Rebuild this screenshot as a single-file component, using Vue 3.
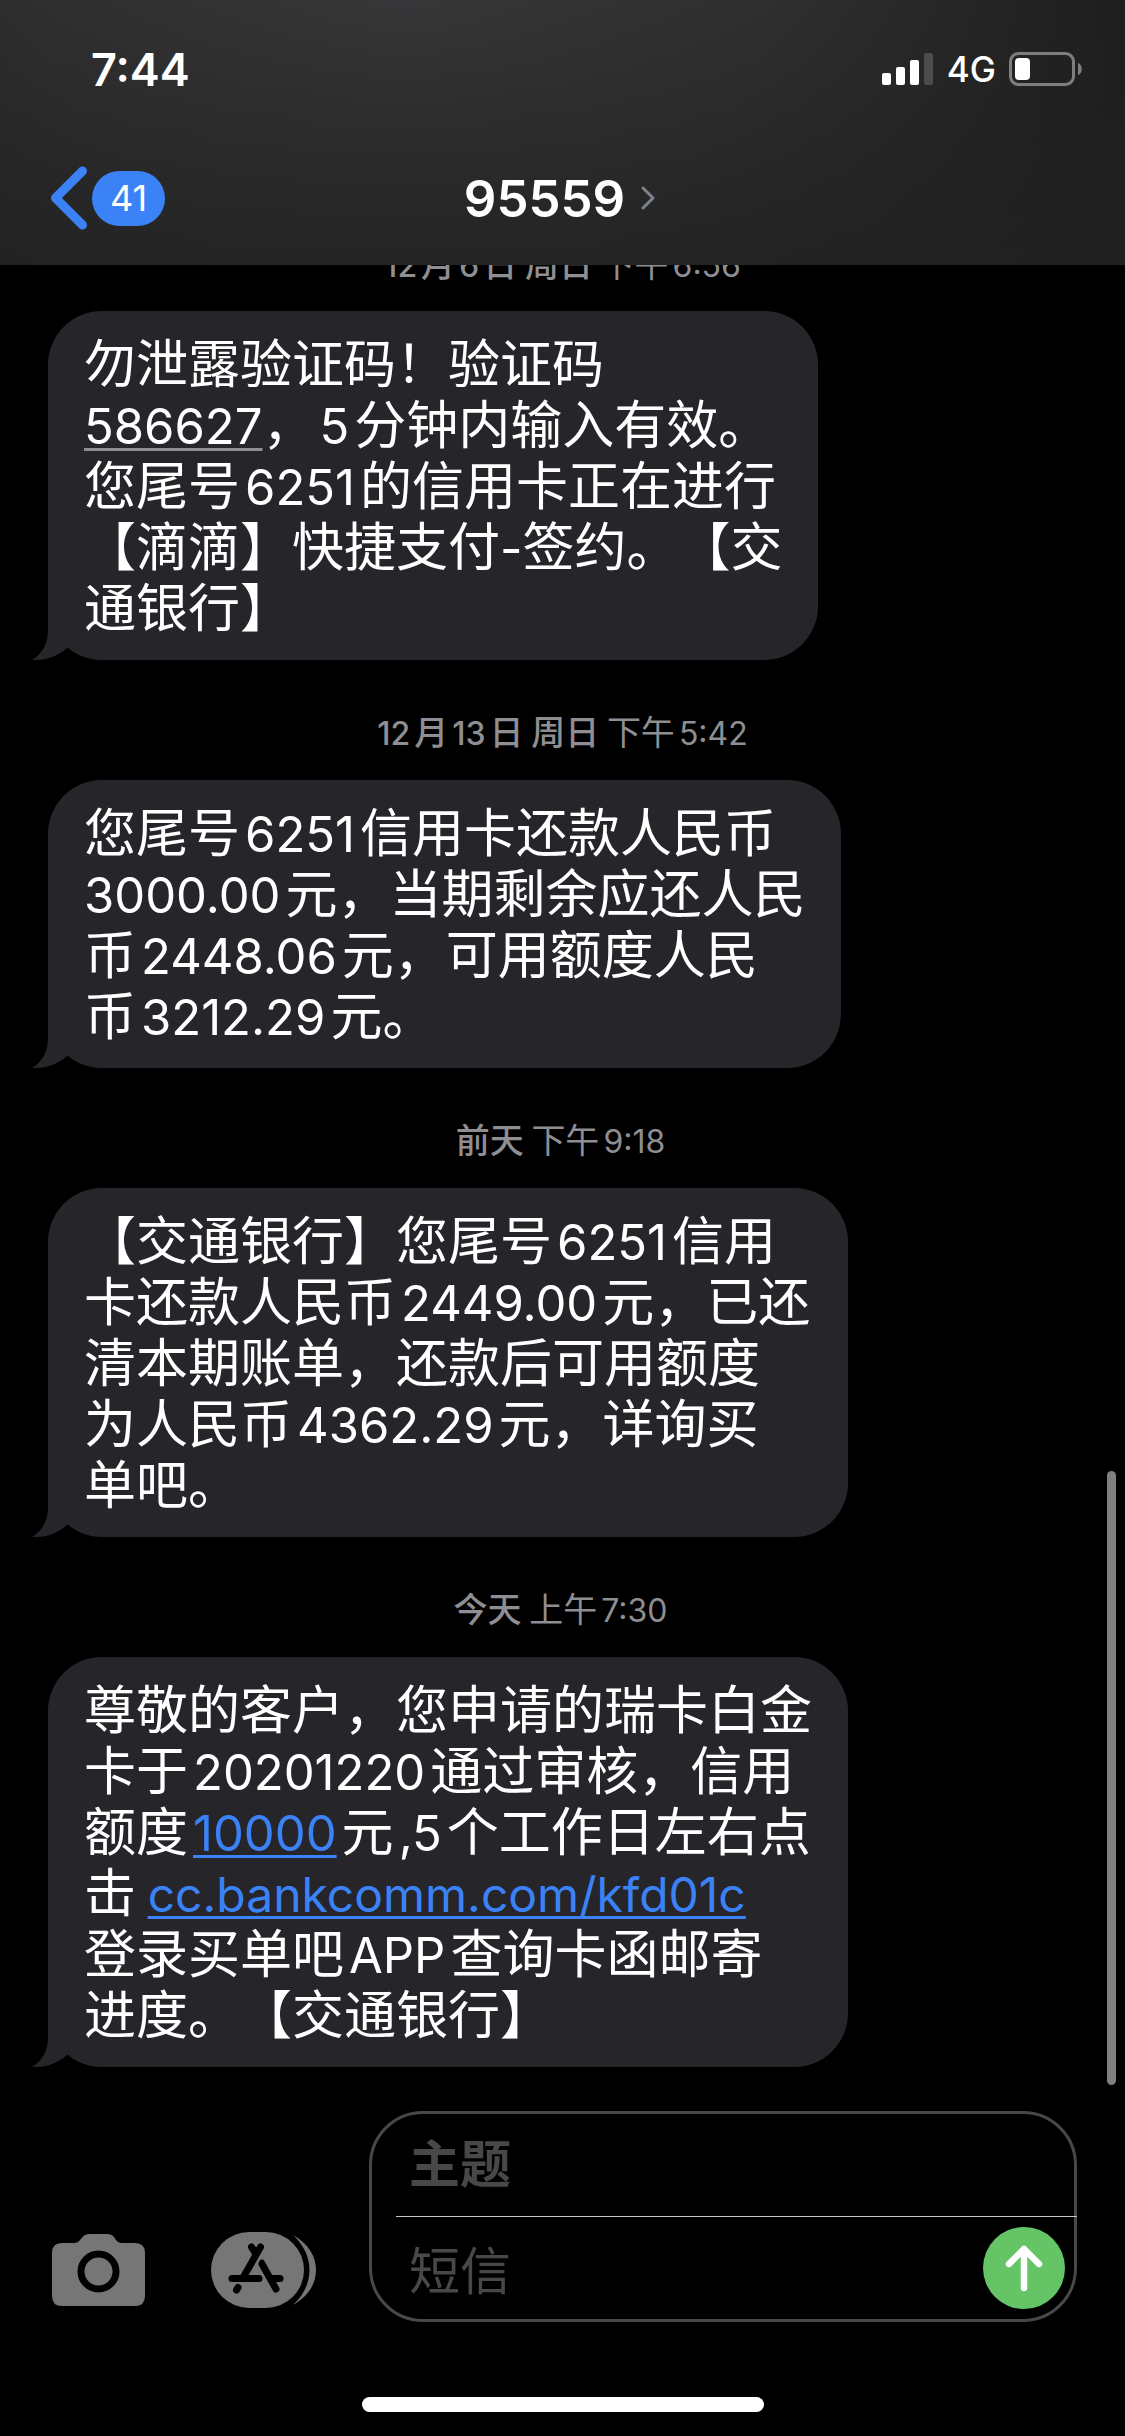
<script setup>
const LATIN = /([A-Za-z0-9,.:/-]+)/

const threads = [
  {
    day: '12月6日 周日',
    time: '下午6:56',
    size: 'w1',
    lines: [
      ['勿泄露验证码！验证码'],
      [{ code: '586627' }, '，5分钟内输入有效。'],
      ['您尾号6251的信用卡正在进行'],
      ['【滴滴】快捷支付-签约。【交'],
      ['通银行】'],
    ],
  },
  {
    day: '12月13日 周日',
    time: '下午5:42',
    size: 'w2',
    lines: [
      ['您尾号6251信用卡还款人民币'],
      ['3000.00元，当期剩余应还人民'],
      ['币2448.06元，可用额度人民'],
      ['币3212.29元。'],
    ],
  },
  {
    day: '前天',
    time: '下午9:18',
    size: 'w3',
    lines: [
      ['【交通银行】您尾号6251信用'],
      ['卡还款人民币2449.00元，已还'],
      ['清本期账单，还款后可用额度'],
      ['为人民币4362.29元，详询买'],
      ['单吧。'],
    ],
  },
  {
    day: '今天',
    time: '上午7:30',
    size: 'w3',
    lines: [
      ['尊敬的客户，您申请的瑞卡白金'],
      ['卡于20201220通过审核，信用'],
      ['额度', { link: '10000' }, '元,5个工作日左右点'],
      ['击 ', { link: 'cc.bankcomm.com/kfd01c', url: true }],
      ['登录买单吧APP查询卡函邮寄'],
      ['进度。【交通银行】'],
    ],
  },
]

// Splits a run of text into Chinese pieces and Latin/digit pieces.
function pieces(text) {
  return text
    .split(LATIN)
    .filter((t) => t !== '')
    .map((t) => ({ t, latin: LATIN.test(t), tight: t === '-' }))
}

// Flattens one line into pieces; a Latin piece that opens a line has no left gap.
function parts(line) {
  return line
    .flatMap((run) => {
      if (typeof run === 'string') return pieces(run)
      if (run.code) return [{ t: run.code, code: true }]
      return [{ t: run.link, link: true, url: run.url }]
    })
    .map((p, i) => ({ ...p, lead: i === 0 }))
}
</script>

<template>
  <div class="screen">
    <header class="top">
      <div class="status">
        <span class="clock">7:44</span>
        <div class="status-right">
          <svg width="52" height="32" viewBox="0 0 52 32" aria-hidden="true">
            <rect x="0" y="20" width="9" height="12" rx="2" fill="#fff" />
            <rect x="14" y="14" width="9" height="18" rx="2" fill="#fff" />
            <rect x="28" y="7" width="9" height="25" rx="2" fill="#fff" />
            <rect x="42" y="0" width="9" height="32" rx="2" fill="#4c4c4c" />
          </svg>
          <span class="network">4G</span>
          <svg width="74" height="34" viewBox="0 0 74 34" aria-hidden="true">
            <rect x="1.5" y="1.5" width="63" height="31" rx="8" fill="none" stroke="#7e7e7e" stroke-width="3" />
            <rect x="6" y="6" width="15" height="22" rx="4" fill="#fff" />
            <path d="M69 11c5 1 5 11 0 12z" fill="#7e7e7e" />
          </svg>
        </div>
      </div>
      <div class="nav">
        <button class="back" type="button" aria-label="返回">
          <svg width="38" height="64" viewBox="0 0 38 64" aria-hidden="true">
            <path d="M32.500 5 L5.500 32 L32.500 59" fill="none" stroke="#3b82f7" stroke-width="9" stroke-linecap="round" stroke-linejoin="round" />
          </svg>
          <span class="count">41</span>
        </button>
        <button class="contact" type="button">
          <span>95559</span>
          <svg width="14" height="24" viewBox="0 0 14 24" aria-hidden="true">
            <path d="M2 2 L12 12 L2 22" fill="none" stroke="#7d838c" stroke-width="3" stroke-linecap="round" stroke-linejoin="round" />
          </svg>
        </button>
        <span></span>
      </div>
    </header>

    <main class="chat">
      <div class="thread">
        <section v-for="m in threads" :key="m.day">
          <p class="stamp"><strong><template v-for="(p, i) in pieces(m.day)" :key="i"><span v-if="p.latin" class="small">{{ p.t }}</span><template v-else>{{ p.t }}</template></template></strong>&nbsp;<template v-for="(p, i) in pieces(m.time)" :key="i"><span v-if="p.latin" class="small">{{ p.t }}</span><template v-else>{{ p.t }}</template></template></p>
          <div class="bubble" :class="m.size">
            <p v-for="(line, n) in m.lines" :key="n" class="line"><template v-for="(p, i) in parts(line)" :key="i"><a v-if="p.link" class="latin" :class="{ url: p.url }" href="#">{{ p.t }}</a><a v-else-if="p.code" class="latin code" href="#">{{ p.t }}</a><span v-else-if="p.latin" class="latin" :class="{ lead: p.lead, tight: p.tight }">{{ p.t }}</span><template v-else>{{ p.t }}</template></template></p>
            <svg class="tail" width="36" height="54" viewBox="0 0 36 54" aria-hidden="true">
              <path d="M16 0 V24 C16 38 10 48 0 54 C14 55 26 50 35 42 V0 Z" fill="#26252a" />
            </svg>
          </div>
        </section>
      </div>
      <div class="scrollbar"></div>
    </main>

    <footer class="composer">
      <div class="tools">
        <button type="button" aria-label="相机">
          <svg width="93" height="72" viewBox="0 0 93 72" aria-hidden="true">
            <path d="M10 9 H22 Q26 9 28 6 Q32 0 37 0 H56 Q61 0 64 6 Q66 9 70 9 H83 Q93 9 93 19 V62 Q93 72 83 72 H10 Q0 72 0 62 V19 Q0 9 10 9 Z" fill="#767676" />
            <circle cx="46.500" cy="37.500" r="17.500" fill="none" stroke="#000" stroke-width="7" />
          </svg>
        </button>
        <button type="button" aria-label="应用">
          <svg width="106" height="76" viewBox="0 0 106 76" aria-hidden="true">
            <path d="M82 3 C98 12 105 25 105 38 C105 51 98 64 82 73 C104 53 104 23 82 3 Z" fill="#767676" />
            <rect width="93" height="76" rx="38" fill="#767676" />
            <g fill="none" stroke="#000" stroke-width="7" stroke-linecap="round" stroke-linejoin="round">
              <path d="M49.500 15 L32.500 45" />
              <path d="M40.500 15 L45 22" />
              <path d="M21 46.500 H48" />
              <path d="M62 46.500 H69" />
              <path d="M51 32 L65 57" />
              <path d="M51 30 L51.500 34" stroke-width="5" />
              <path d="M27 55.500 L25.500 58" />
            </g>
          </svg>
        </button>
      </div>
      <form class="field" @submit.prevent>
        <input class="subject" type="text" placeholder="主题" aria-label="主题" />
        <div class="body">
          <input type="text" placeholder="短信" aria-label="短信" />
          <button class="send" type="submit" aria-label="发送">
            <svg width="38" height="48" viewBox="0 0 38 48" aria-hidden="true">
              <path d="M19 44 V5 M4 20 L19 5 L34 20" fill="none" stroke="#fff" stroke-width="6.500" stroke-linecap="round" stroke-linejoin="round" />
            </svg>
          </button>
        </div>
      </form>
    </footer>
    <div class="home"></div>
  </div>
</template>

<style>
body {
  background: #000;
}
</style>

<style scoped>
.screen {
  display: flex;
  flex-direction: column;
  min-height: 100vh;
  box-sizing: border-box;
  padding-bottom: 24px;
  background: #000;
  color: #fff;
  font-family: "Inter", "Noto Sans CJK SC", sans-serif;
  text-spacing-trim: space-all;
}

button {
  display: flex;
  align-items: center;
  padding: 0;
  border: 0;
  background: none;
  color: inherit;
  font: inherit;
}

svg {
  display: block;
  flex: none;
}

.top {
  padding: 39px 0 35px;
  background:
    linear-gradient(to bottom, rgba(34, 34, 34, 0) 0%, rgba(34, 34, 34, 0.8) 100%),
    radial-gradient(ellipse 64% 190% at 36% 0%, #373739 0%, #2f2f30 50%, #1e1e1e 100%);
}

.status {
  display: flex;
  align-items: center;
  justify-content: space-between;
  height: 60px;
  padding: 0 42px 0 91px;
}

.clock {
  font-size: 45px;
  font-weight: 600;
}

.status-right {
  display: flex;
  align-items: center;
  gap: 13px;
}

.network {
  font-size: 35px;
  font-weight: 500;
}

.nav {
  display: grid;
  grid-template-columns: 1fr auto 1fr;
  align-items: center;
  height: 64px;
  margin-top: 67px;
  padding: 0 56px 0 50px;
}

.back {
  gap: 4px;
}

.count {
  width: 73px;
  border-radius: 28px;
  background: #3b82f7;
  font-size: 36px;
  line-height: 55px;
  text-align: center;
}

.contact {
  gap: 16px;
  font-size: 51px;
  font-weight: 600;
}

.chat {
  position: relative;
  overflow: hidden;
}

.thread {
  margin-top: -22px;
  padding: 0 48px 27px;
}

.stamp {
  margin: 0;
  padding-bottom: 28px;
  color: #8e8e93;
  font-family: "Noto Sans CJK SC", sans-serif;
  font-size: 34px;
  line-height: 40px;
  text-align: center;
  white-space: nowrap;
}

section + section .stamp {
  padding: 51px 0 29px;
}

.stamp strong {
  font-weight: 500;
}

.small {
  margin: 0 4px;
  font-family: "Inter", sans-serif;
  font-size: 32px;
  line-height: 1;
}

.bubble {
  position: relative;
  box-sizing: border-box;
  padding: 19px 36px 25px;
  border-radius: 54px;
  background: #26252a;
  font-family: "Noto Sans CJK SC", sans-serif;
  font-size: 52px;
}

.w1 {
  width: 770px;
}

.w2 {
  width: 793px;
}

.w3 {
  width: 800px;
}

.line {
  height: 61px;
  margin: 0;
  line-height: 61px;
  white-space: nowrap;
}

.latin {
  margin: 0 5px;
  font-family: "Inter", sans-serif;
  font-size: 49px;
  line-height: 1;
}

.latin.lead {
  margin-left: 0;
}

.latin.tight {
  margin: 0;
}

a.latin {
  color: #3b82f7;
  text-decoration: underline;
  text-decoration-thickness: 3px;
  text-underline-offset: 4px;
}

a.url {
  margin: 0;
  font-size: 48px;
}

a.code {
  margin: 0;
  color: #fff;
  text-decoration-color: #8e8e93;
}

.tail {
  position: absolute;
  bottom: 0;
  left: -16px;
}

.scrollbar {
  position: absolute;
  right: 9px;
  bottom: 9px;
  width: 9px;
  height: 614px;
  border-radius: 5px;
  background: #7f7f7f;
}

.composer {
  display: flex;
  align-items: flex-end;
  gap: 52px;
  padding: 17px 48px 0 52px;
}

.tools {
  display: flex;
  align-items: center;
  gap: 66px;
  padding-bottom: 14px;
}

.field {
  flex: 1;
  box-sizing: border-box;
  min-width: 0;
  height: 211px;
  border: 3px solid #48484b;
  border-radius: 54px;
}

.field input {
  min-width: 0;
  box-sizing: border-box;
  padding: 0;
  border: 0;
  outline: 0;
  background: none;
  color: #fff;
  font-family: "Noto Sans CJK SC", sans-serif;
  font-size: 51px;
}

.field input::placeholder {
  color: #48484a;
  opacity: 1;
}

.field .subject {
  display: block;
  width: calc(100% - 37px);
  height: 102px;
  margin-left: 37px;
  padding-bottom: 8px;
  font-weight: 700;
}

.body {
  display: flex;
  align-items: center;
  height: 103px;
  margin: 0 -3px 0 24px;
  padding: 0 12px 0 13px;
  border-top: 1px solid #c6c6c8;
  box-sizing: border-box;
}

.body input {
  flex: 1;
  height: 100px;
}

.send {
  justify-content: center;
  width: 82px;
  height: 82px;
  border-radius: 50%;
  background: #65c466;
}

.home {
  width: 402px;
  height: 15px;
  margin: auto auto 0;
  border-radius: 8px;
  background: #fff;
}
</style>
